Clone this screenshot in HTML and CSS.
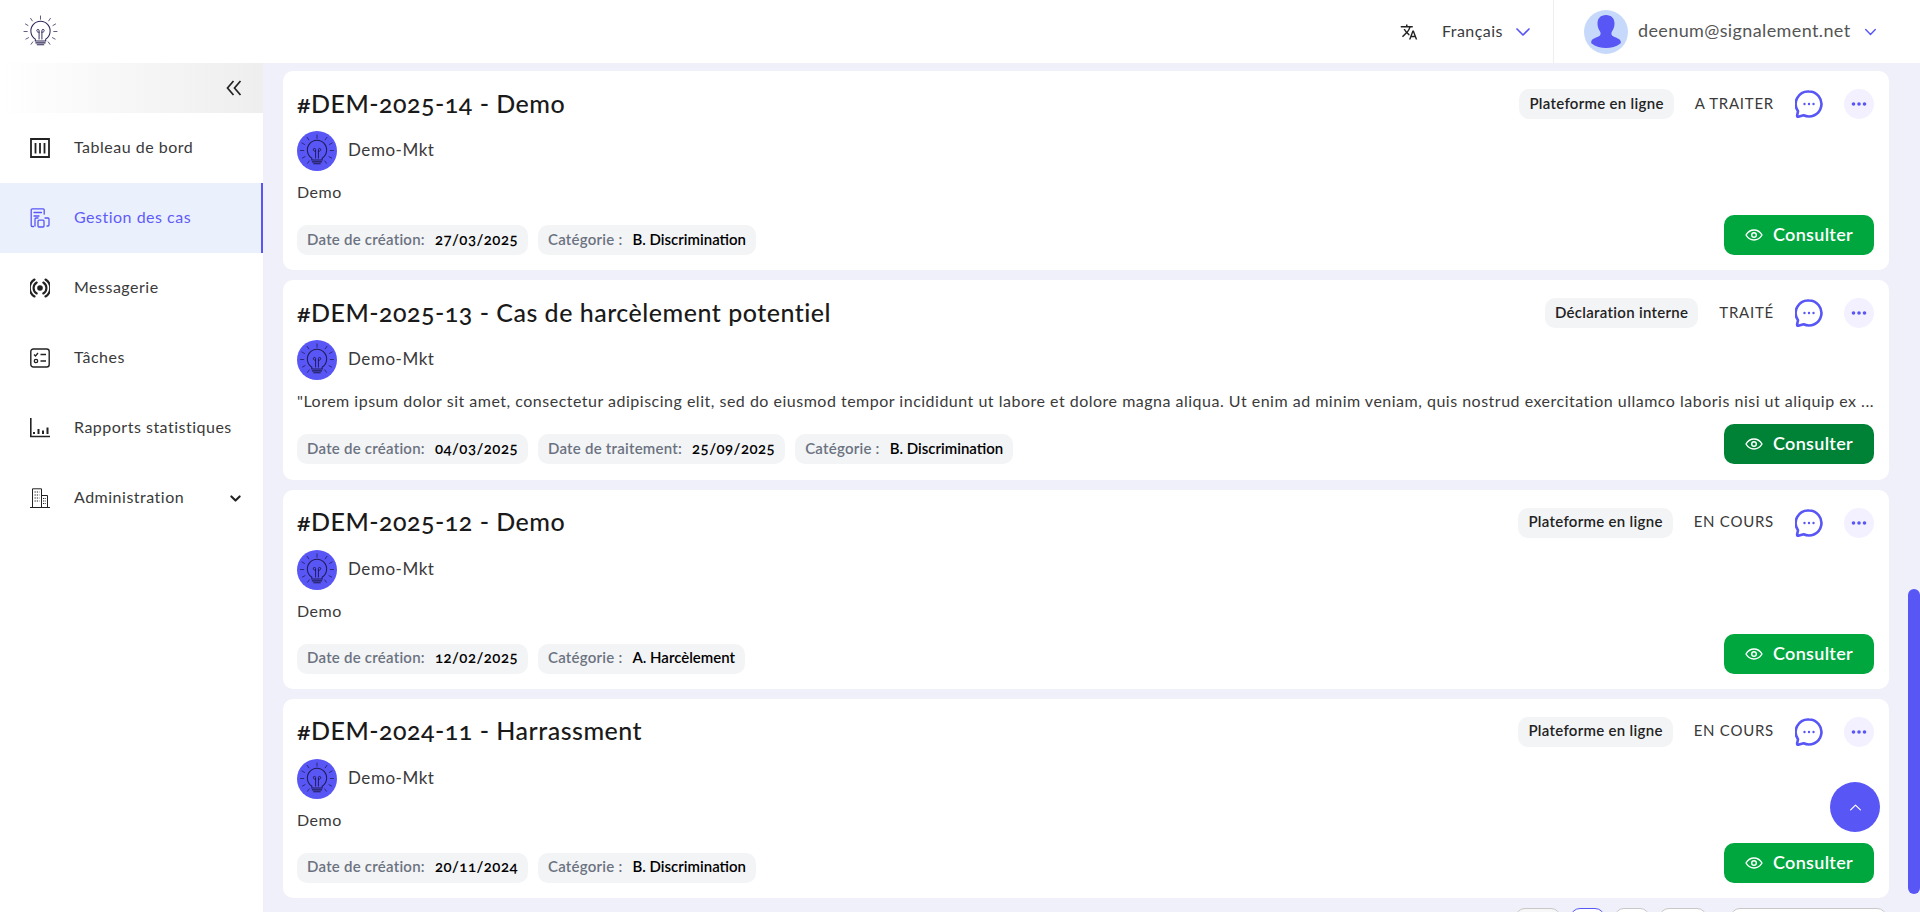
FILE: index.html
```html
<!DOCTYPE html>
<html lang="fr">
<head>
<meta charset="utf-8">
<title>Gestion des cas</title>
<link rel="stylesheet" href="styles.css">
</head>
<body>
<svg class="defs" width="0" height="0" aria-hidden="true">
  <symbol id="bulb" viewBox="0 0 36 36">
    <g fill="none" stroke="currentColor" stroke-linecap="round">
      <path d="M12.500 25.500a10.200 10.200 0 1 1 11 0v2h-11z" stroke-width="1.100"/>
      <path d="M13 29.500h10M14.500 31.500h7" stroke-width="1.100"/>
      <path d="M16.500 25.500v-9a1.200 1.200 0 0 0-2.400 0c0 1.500 1.200 1.800 2.400 1.800M19.500 25.500v-9a1.200 1.200 0 0 1 2.400 0c0 1.500-1.200 1.800-2.400 1.800" stroke-width="1"/>
      <path d="M18 1v3.500M7.500 3.500l1.800 2.700M28.500 3.500l-1.800 2.700M2 9.500l2.800 1.600M34 9.500l-2.800 1.600M.5 17.500h3.500M32 17.500h3.500M2.500 25.500l2.800-1.500M33.500 25.500l-2.800-1.500M8 31l1.800-2.500M28 31l-1.800-2.500" stroke-width="1" opacity=".8"/>
    </g>
  </symbol>
  <symbol id="chat" viewBox="0 0 28 28">
    <path d="M14 1.500a12.500 12.500 0 1 1-5.400 23.800l-5.300 1.400c-.8.200-1.300-.4-1.200-1.100l.9-4.400A12.500 12.500 0 0 1 14 1.500z" fill="none" stroke="currentColor" stroke-width="2.600" stroke-linejoin="round"/>
    <circle cx="9.500" cy="14" r="1.200" fill="currentColor"/><circle cx="14" cy="14" r="1.200" fill="currentColor"/><circle cx="18.500" cy="14" r="1.200" fill="currentColor"/>
  </symbol>
  <symbol id="dots" viewBox="0 0 16 4">
    <circle cx="2.500" cy="2" r="1.800" fill="currentColor"/><circle cx="8" cy="2" r="1.800" fill="currentColor"/><circle cx="13.500" cy="2" r="1.800" fill="currentColor"/>
  </symbol>
  <symbol id="eye" viewBox="0 0 18 12">
    <path d="M1 6c2-3.300 4.700-5 8-5s6 1.700 8 5c-2 3.300-4.700 5-8 5s-6-1.700-8-5z" fill="none" stroke="currentColor" stroke-width="1.400"/>
    <circle cx="9" cy="6" r="2.300" fill="none" stroke="currentColor" stroke-width="1.400"/>
  </symbol>
  <symbol id="chev" viewBox="0 0 16 10">
    <path d="M2 2l6 6 6-6" fill="none" stroke="currentColor" stroke-linecap="round" stroke-linejoin="round"/>
  </symbol>
</svg>

<header class="topbar">
  <div class="brand"><svg class="brand-logo"><use href="#bulb"/></svg></div>
  <div class="lang">
    <svg class="lang-icon" viewBox="0 0 24 24"><path fill="currentColor" d="M12.870 15.070l-2.540-2.510.03-.03A17.520 17.520 0 0 0 14.070 6H17V4h-7V2H8v2H1v2h11.170A15.700 15.700 0 0 1 9 11.350 15.700 15.700 0 0 1 6.690 8h-2c.73 1.630 1.730 3.170 2.980 4.560l-5.090 5.020L4 19l5-5 3.110 3.110.76-2.040zM18.500 10h-2L12 22h2l1.120-3h4.750L21 22h2l-4.500-12zm-2.620 7l1.620-4.330L19.120 17h-3.240z"/></svg>
    <span class="lang-name">Français</span>
    <svg class="lang-chev"><use href="#chev"/></svg>
  </div>
  <div class="user">
    <span class="user-avatar">
      <svg viewBox="0 0 44 44"><path fill="currentColor" d="M22 5c5.500 0 8.500 3.500 8.500 8.500 0 3-.9 5.600-2.400 7.700-.9 1.300-1 3.500.2 4.600 1.600 1.500 7 2.400 8.200 5 .4.900.4 1.700.2 2.400C32.500 36.500 27 38 22 38s-10.500-1.500-14.700-4.800c-.2-.7-.2-1.500.2-2.400 1.200-2.600 6.600-3.500 8.200-5 1.200-1.100 1.100-3.300.2-4.600-1.500-2.100-2.400-4.700-2.400-7.700C13.500 8.500 16.500 5 22 5z"/></svg>
    </span>
    <span class="user-mail">deenum@signalement.net</span>
    <svg class="user-chev"><use href="#chev"/></svg>
  </div>
</header>

<div class="layout">
  <aside class="sidebar">
    <div class="collapse">
      <svg class="collapse-icon" viewBox="0 0 16 16"><path d="M7.500 1L1.500 8l6 7M14.500 1L8.500 8l6 7" fill="none" stroke="currentColor" stroke-width="1.700"/></svg>
    </div>
    <nav>
      <a class="nav-item">
        <svg class="nav-icon" viewBox="0 0 20 20"><path fill="none" stroke="currentColor" stroke-width="1.800" d="M1 1h18v18H1z"/><path stroke="currentColor" stroke-width="1.800" d="M5.500 5v10.500M10 5v10.500M14.500 5v10.500"/></svg>
        <span>Tableau de bord</span>
      </a>
      <a class="nav-item active">
        <svg class="nav-icon" viewBox="0 0 20 20"><path fill="none" stroke="currentColor" stroke-width="1.300" stroke-linecap="round" stroke-linejoin="round" d="M3.500 18.500H2.200a1 1 0 0 1-1-1V1.800a1 1 0 0 1 1-1h11a1 1 0 0 1 1 1v4.400M4 4.500h7.500M4 8h5M15 10h3a1 1 0 0 1 1 1v6a1 1 0 0 1-1 1h-1M5 18v-7a1 1 0 0 1 1-1h2M8 13.200a1 1 0 0 1 1-1h4a1 1 0 0 1 1 1V18a1 1 0 0 1-1 1H9a1 1 0 0 1-1-1z"/></svg>
        <span>Gestion des cas</span>
      </a>
      <a class="nav-item">
        <svg class="nav-icon" viewBox="0 0 20 20"><circle cx="10" cy="10" r="2.800" fill="currentColor"/><path fill="none" stroke="currentColor" stroke-width="2.100" stroke-linecap="round" d="M6.700 4.500a6.400 6.400 0 0 0 0 11M13.300 4.500a6.400 6.400 0 0 1 0 11M4.500 1.500a10 10 0 0 0 0 17M15.500 1.500a10 10 0 0 1 0 17"/></svg>
        <span>Messagerie</span>
      </a>
      <a class="nav-item">
        <svg class="nav-icon" viewBox="0 0 20 20"><rect x=".8" y="1" width="18.400" height="18" rx="2.500" fill="none" stroke="currentColor" stroke-width="1.400"/><path fill="none" stroke="currentColor" stroke-width="1.300" d="M4 6.500l1.500 1.500L8 5M10.500 6.500h5.500M10.500 13h5.500"/><circle cx="6" cy="13" r="1.700" fill="none" stroke="currentColor" stroke-width="1.300"/></svg>
        <span>Tâches</span>
      </a>
      <a class="nav-item">
        <svg class="nav-icon" viewBox="0 0 20 20"><path fill="none" stroke="currentColor" stroke-width="1.600" d="M.8 0v18.500H20"/><path stroke="currentColor" stroke-width="2" d="M4 16v-2M8.500 16v-5M13 16v-3.500M17.500 16V9.500"/></svg>
        <span>Rapports statistiques</span>
      </a>
      <a class="nav-item">
        <svg class="nav-icon" viewBox="0 0 20 20"><path fill="none" stroke="currentColor" stroke-width="1" d="M2.500 19.500V.8h9v18.700M11.500 7.500h6v12M0 19.500h20"/><path stroke="currentColor" stroke-width="1" stroke-dasharray="1.300 1" d="M4.500 4h5M4.500 7h5M4.500 10h5M4.500 13h5M13 10.500h3M13 13h3M13 15.500h3"/></svg>
        <span>Administration</span>
        <svg class="nav-chev"><use href="#chev"/></svg>
      </a>
    </nav>
  </aside>

  <main class="main">
    <article class="card">
      <div class="card-head">
        <h2 class="card-title">#DEM-2025-14 - Demo</h2>
        <span class="tag">Plateforme en ligne</span>
        <span class="status">A TRAITER</span>
        <svg class="chat"><use href="#chat"/></svg>
        <span class="more"><svg><use href="#dots"/></svg></span>
      </div>
      <div class="org"><span class="org-logo"><svg><use href="#bulb"/></svg></span><span class="org-name">Demo-Mkt</span></div>
      <p class="desc">Demo</p>
      <div class="card-foot">
        <span class="chip"><span class="chip-k">Date de création:</span><span class="chip-v chip-date">27/03/2025</span></span>
        <span class="chip"><span class="chip-k">Catégorie :</span><span class="chip-v">B. Discrimination</span></span>
        <a class="consult"><svg><use href="#eye"/></svg>Consulter</a>
      </div>
    </article>

    <article class="card">
      <div class="card-head">
        <h2 class="card-title">#DEM-2025-13 - Cas de harcèlement potentiel</h2>
        <span class="tag">Déclaration interne</span>
        <span class="status">TRAITÉ</span>
        <svg class="chat"><use href="#chat"/></svg>
        <span class="more"><svg><use href="#dots"/></svg></span>
      </div>
      <div class="org"><span class="org-logo"><svg><use href="#bulb"/></svg></span><span class="org-name">Demo-Mkt</span></div>
      <p class="desc">"Lorem ipsum dolor sit amet, consectetur adipiscing elit, sed do eiusmod tempor incididunt ut labore et dolore magna aliqua. Ut enim ad minim veniam, quis nostrud exercitation ullamco laboris nisi ut aliquip ex ...</p>
      <div class="card-foot">
        <span class="chip"><span class="chip-k">Date de création:</span><span class="chip-v chip-date">04/03/2025</span></span>
        <span class="chip"><span class="chip-k">Date de traitement:</span><span class="chip-v chip-date">25/09/2025</span></span>
        <span class="chip"><span class="chip-k">Catégorie :</span><span class="chip-v">B. Discrimination</span></span>
        <a class="consult hover"><svg><use href="#eye"/></svg>Consulter</a>
      </div>
    </article>

    <article class="card">
      <div class="card-head">
        <h2 class="card-title">#DEM-2025-12 - Demo</h2>
        <span class="tag">Plateforme en ligne</span>
        <span class="status">EN COURS</span>
        <svg class="chat"><use href="#chat"/></svg>
        <span class="more"><svg><use href="#dots"/></svg></span>
      </div>
      <div class="org"><span class="org-logo"><svg><use href="#bulb"/></svg></span><span class="org-name">Demo-Mkt</span></div>
      <p class="desc">Demo</p>
      <div class="card-foot">
        <span class="chip"><span class="chip-k">Date de création:</span><span class="chip-v chip-date">12/02/2025</span></span>
        <span class="chip"><span class="chip-k">Catégorie :</span><span class="chip-v">A. Harcèlement</span></span>
        <a class="consult"><svg><use href="#eye"/></svg>Consulter</a>
      </div>
    </article>

    <article class="card">
      <div class="card-head">
        <h2 class="card-title">#DEM-2024-11 - Harrassment</h2>
        <span class="tag">Plateforme en ligne</span>
        <span class="status">EN COURS</span>
        <svg class="chat"><use href="#chat"/></svg>
        <span class="more"><svg><use href="#dots"/></svg></span>
      </div>
      <div class="org"><span class="org-logo"><svg><use href="#bulb"/></svg></span><span class="org-name">Demo-Mkt</span></div>
      <p class="desc">Demo</p>
      <div class="card-foot">
        <span class="chip"><span class="chip-k">Date de création:</span><span class="chip-v chip-date">20/11/2024</span></span>
        <span class="chip"><span class="chip-k">Catégorie :</span><span class="chip-v">B. Discrimination</span></span>
        <a class="consult"><svg><use href="#eye"/></svg>Consulter</a>
      </div>
    </article>

    <div class="pager">
      <span class="page page-prev"></span>
      <span class="page page-on"></span>
      <span class="page page-n"></span>
      <span class="page page-next"></span>
      <span class="page page-size"></span>
    </div>
  </main>
</div>

<a class="to-top"><svg viewBox="0 0 16 10"><path d="M2 8l6-6 6 6" fill="none" stroke="currentColor" stroke-width="1.500" stroke-linecap="round" stroke-linejoin="round"/></svg></a>
<div class="scroll-thumb"></div>
</body>
</html>
```
FILE: styles.css
```css
* { box-sizing: border-box; }
html, body { height: 912px; }
body {
  margin: 0;
  overflow: hidden;
  background: #f0f0fa;
  color: #222;
  font-family: Lato, "Noto Sans", sans-serif;
  font-variant-numeric: oldstyle-nums;
  display: flex;
  flex-direction: column;
}
.defs { position: absolute; }

.topbar {
  height: 63px;
  flex: none;
  background: #fff;
  display: flex;
  align-items: center;
}
.brand { padding-left: 23px; flex: 1; display: flex; }
.brand-logo { width: 35px; height: 34px; color: #2d2555; }

.lang { display: flex; align-items: center; height: 100%; padding-right: 22px; border-right: 1px solid #eee; }
.lang-icon { width: 18px; height: 18px; color: #222; margin-right: 24px; }
.lang-name { font-size: 16px; color: #3a3a3a; width: 62px; margin-right: 11px; padding-bottom: 2px; letter-spacing: .45px; white-space: nowrap; }
.lang-chev { width: 16px; height: 10px; color: #5856f5; stroke-width: 1.7; }

.user { display: flex; align-items: center; width: 366px; padding-left: 30px; }
.user-avatar { width: 44px; height: 44px; border-radius: 50%; background: #c7d9fb; color: #5856f5; display: flex; }
.user-avatar svg { width: 44px; height: 44px; }
.user-mail { font-size: 18px; color: #555; margin-left: 10px; width: 212px; padding-bottom: 4px; letter-spacing: .38px; white-space: nowrap; }
.user-chev { width: 13px; height: 8px; color: #5856f5; margin-left: 14px; stroke-width: 1.8; }

.layout { flex: 1; display: flex; min-height: 0; }
.sidebar { width: 263px; flex: none; background: #fff; }
.collapse {
  height: 50px;
  background: linear-gradient(90deg, #fff 0%, #eee 100%);
  display: flex;
  align-items: center;
  justify-content: flex-end;
  padding-right: 21px;
}
.collapse-icon { width: 16px; height: 16px; color: #222; }

.nav-item {
  height: 70px;
  display: flex;
  align-items: center;
  padding-left: 30px;
  font-size: 16px;
  letter-spacing: .5px;
  color: #3a3a3a;
}
.nav-item span { padding-bottom: 4px; }
.nav-icon { width: 20px; height: 20px; color: #222; margin-right: 24px; flex: none; }
.nav-item.active { background: #ebf0fd; color: #5f5cf6; border-right: 2px solid #5856f5; }
.nav-item.active .nav-icon { color: #5856f5; }
.nav-chev { width: 11px; height: 7px; margin-left: auto; margin-right: 22px; color: #222; stroke-width: 3; }

.main { flex: 1; min-width: 0; padding: 8px 31px 0 20px; }
.card {
  height: 199.340px;
  background: #fff;
  border-radius: 10px;
  padding: 18px 15px 15px 14px;
  margin-bottom: 10px;
}
.card-head { height: 30px; display: flex; align-items: center; }
.card-title { margin: 0 auto 0 0; padding-bottom: 3px; font-size: 25px; font-weight: 500; color: #1a1a1a; letter-spacing: .5px; }
.tag {
  height: 30px;
  display: flex;
  align-items: center;
  padding: 0 10px 3px;
  border-radius: 10px;
  background: #f3f4f6;
  font-size: 15px;
  font-weight: 600;
  color: #222;
  letter-spacing: .3px;
}
.status { font-size: 15px; color: #3a3a3a; margin-left: 21px; padding-bottom: 3px; letter-spacing: .75px; }
.chat { width: 28px; height: 28px; color: #5856f5; margin-left: 21px; }
.more { width: 30px; height: 30px; margin-left: 21px; border-radius: 50%; background: #f3f0ff; color: #5856f5; display: flex; align-items: center; justify-content: center; }
.more svg { width: 16px; height: 4px; }

.org { margin-top: 12px; height: 40px; display: flex; align-items: center; }
.org-logo { width: 40px; height: 40px; border-radius: 50%; background: #5856f5; color: #201a52; display: flex; align-items: center; justify-content: center; }
.org-logo svg { width: 34px; height: 34px; }
.org-name { margin-left: 11px; padding-bottom: 3px; font-size: 17px; color: #3a3a3a; letter-spacing: .55px; }

.desc { margin: 11px 0 0; height: 20px; line-height: 20px; font-size: 16px; color: #3a3a3a; white-space: nowrap; overflow: hidden; letter-spacing: .5px; }

.card-foot { margin-top: 13px; height: 40px; display: flex; align-items: flex-end; gap: 10px; }
.chip { height: 30px; display: flex; align-items: center; padding: 0 10px 3px; border-radius: 10px; background: #f3f4f6; font-size: 15px; font-weight: 600; }
.chip-k { color: #6b7280; margin-right: 10px; letter-spacing: .24px; }
.chip-v { color: #000; }
.chip-date { letter-spacing: .45px; }
.consult {
  margin-left: auto;
  width: 150px;
  height: 40px;
  padding-bottom: 2px;
  border-radius: 10px;
  background: #00a63e;
  color: #fff;
  font-size: 18px;
  font-weight: 600;
  letter-spacing: .3px;
  display: flex;
  align-items: center;
  justify-content: center;
}
.consult svg { width: 18px; height: 12px; margin-right: 10px; margin-top: 2px; }
.consult.hover { background: #008236; }

.pager { display: flex; justify-content: flex-end; height: 30px; padding-right: 2px; }
.page { height: 30px; border: 1px solid #c8c8c8; border-radius: 10px; background: #fff; margin-left: 9px; }
.page-prev { width: 46px; background: #f7f7f7; }
.page-on { width: 35px; border-color: #5856f5; }
.page-n { width: 36px; }
.page-next { width: 48px; }
.page-size { width: 157px; margin-left: 23px; }

.to-top { position: fixed; left: 1830px; top: 782px; width: 50px; height: 50px; border-radius: 50%; background: #5856f5; color: #fff; display: flex; align-items: center; justify-content: center; }
.to-top svg { width: 13px; height: 9px; }
.scroll-thumb { position: fixed; left: 1908px; top: 589px; width: 12px; height: 305px; border-radius: 6px; background: #5856f5; }
```
